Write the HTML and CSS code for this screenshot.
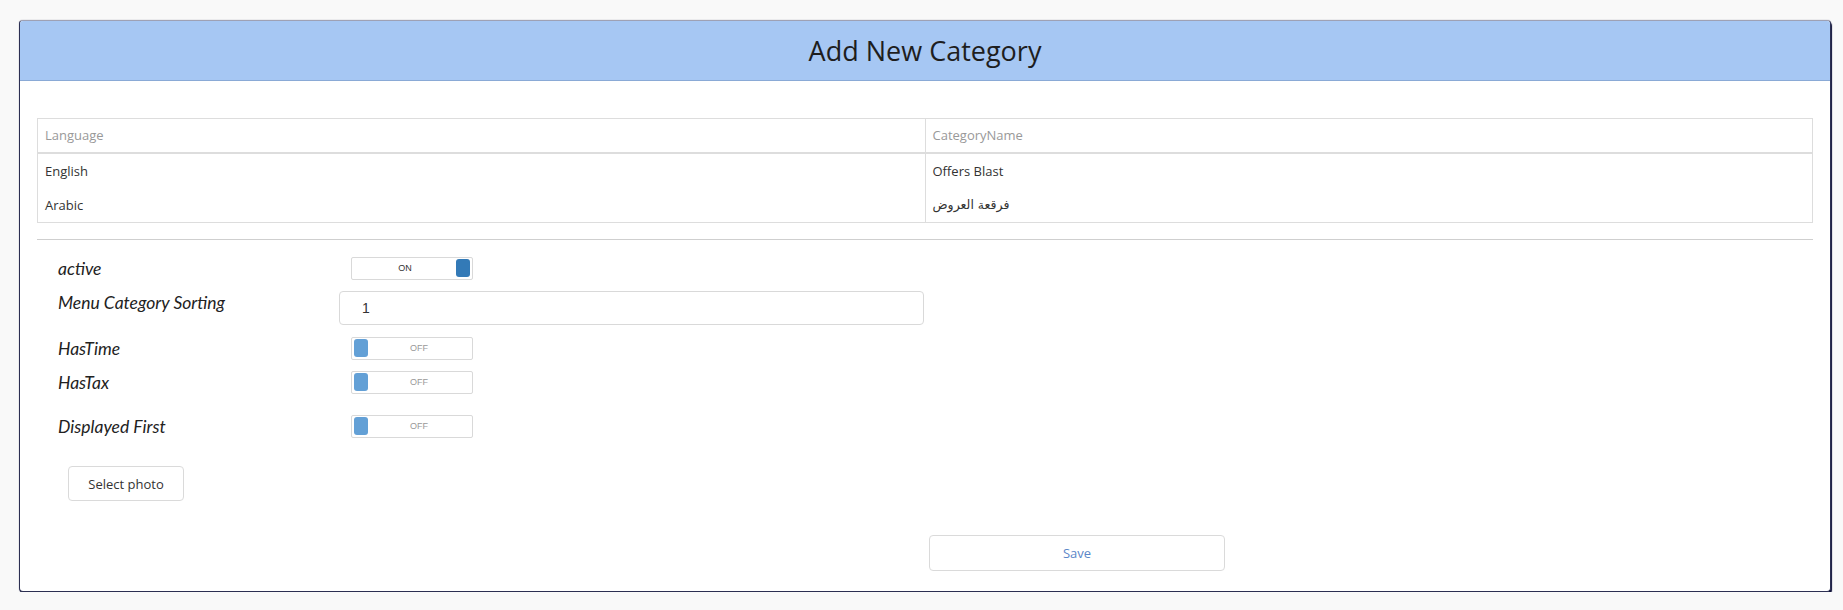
FILE: index.html
```html
<!DOCTYPE html>
<html>
<head>
<meta charset="utf-8">
<link rel="stylesheet" href="styles.css">
</head>
<body>
<div class="card">
  <div class="card-head"><h1 class="title">Add New Category</h1></div>
  <div class="card-body">
    <table class="lang-table">
      <thead>
        <tr><th>Language</th><th>CategoryName</th></tr>
      </thead>
      <tbody>
        <tr><td>English</td><td>Offers Blast</td></tr>
        <tr><td>Arabic</td><td><span class="ar" dir="rtl">فرقعة العروض</span></td></tr>
      </tbody>
    </table>
    <div class="divider"></div>
    <div class="form">
      <div class="row r-active">
        <label class="lbl">active</label>
        <div class="toggle on"><span class="tg-text">ON</span><span class="handle"></span></div>
      </div>
      <div class="row r-sort">
        <label class="lbl">Menu Category Sorting</label>
        <div class="input">1</div>
      </div>
      <div class="row r-time">
        <label class="lbl">HasTime</label>
        <div class="toggle off"><span class="handle"></span><span class="tg-text">OFF</span></div>
      </div>
      <div class="row r-tax">
        <label class="lbl">HasTax</label>
        <div class="toggle off"><span class="handle"></span><span class="tg-text">OFF</span></div>
      </div>
      <div class="row r-first">
        <label class="lbl">Displayed First</label>
        <div class="toggle off"><span class="handle"></span><span class="tg-text">OFF</span></div>
      </div>
      <div class="photo-row"><button class="btn">Select photo</button></div>
    </div>
    <div class="save-row"><button class="btn save">Save</button></div>
  </div>
</div>
</body>
</html>
```

FILE: styles.css
```css
html, body {
  margin: 0;
  padding: 0;
  background: #f9f9f9;
}
body {
  padding-top: 20px;
  font-family: "Open Sans", "Noto Sans", sans-serif;
}
.card {
  margin: 0 12px 0 19px;
  background: #fff;
  border: 1px solid #2c2f52;
  border-top-color: #9ea1b4;
  border-radius: 4px;
  box-shadow: 1px 2px 1px #0c0e36, 0 0 1px rgba(20, 22, 60, 0.6);
  overflow: hidden;
}
.card-head {
  height: 59px;
  background: #a6c7f3;
  border-bottom: 1px solid #8aaad6;
  display: flex;
  align-items: center;
  justify-content: center;
}
.title {
  margin: 0;
  font-weight: 400;
  font-size: 27px;
  color: #1e1e1e;
  font-family: "Open Sans", "Noto Sans", sans-serif;
  padding-bottom: 1px;
}
.card-body {
  padding: 37px 17px 20px;
}
.lang-table {
  width: 100%;
  border-collapse: collapse;
  border: 1px solid #ddd;
  table-layout: fixed;
  font-size: 13px;
}
.lang-table th, .lang-table td {
  padding: 8px 7px;
  text-align: left;
}
.lang-table th {
  color: #999;
  font-weight: 400;
  line-height: 17px;
  height: 17px;
  border-bottom: 2px solid #ddd;
  border-left: 1px solid #ddd;
}
.lang-table td {
  color: #333;
  line-height: 18px;
  height: 18px;
  border-left: 1px solid #ddd;
}
.ar {
  font-family: "DejaVu Sans", "Noto Sans", sans-serif;
  font-size: 12.5px;
  line-height: 18px;
  display: inline-block;
  vertical-align: top;
}
.divider {
  height: 1px;
  background: #cfcfcf;
  margin-top: 16px;
}
.form {
  padding-left: 21px;
}
.row {
  display: grid;
  grid-template-columns: 281px auto;
  align-items: start;
}
.lbl {
  font-family: "Lato", "Open Sans", sans-serif;
  font-style: italic;
  font-size: 17.5px;
  line-height: 23px;
  color: #222;
}
.r-active { margin-top: 17px; }
.r-sort { margin-top: 11px; }
.r-time { margin-top: 12px; }
.r-tax { margin-top: 11px; }
.r-first { margin-top: 21px; }
.toggle {
  margin-left: 12px;
  width: 122px;
  height: 23px;
  box-sizing: border-box;
  border: 1px solid #d9d9d9;
  border-radius: 2px;
  display: flex;
  align-items: center;
  padding: 0 2px 1px;
}
.handle {
  width: 14px;
  height: 18px;
  border-radius: 3px;
  flex: none;
}
.on .handle { background: #337ab7; }
.off .handle { background: #63a0d6; }
.tg-text {
  flex: 1;
  text-align: center;
  font-family: "Liberation Sans", Arial, sans-serif;
  font-size: 9px;
  line-height: 12px;
}
.on .tg-text { color: #333; }
.off .tg-text { color: #999; }
.input {
  width: 585px;
  height: 34px;
  box-sizing: border-box;
  border: 1px solid #d9d9d9;
  border-radius: 4px;
  padding-left: 22px;
  display: flex;
  align-items: center;
  font-family: "Liberation Sans", Arial, sans-serif;
  font-size: 14px;
  color: #333;
}
.photo-row {
  margin-top: 28px;
  padding-left: 10px;
  display: flex;
}
.btn {
  height: 35px;
  background: #fff;
  border: 1px solid #dadada;
  border-radius: 4px;
  font-family: "Open Sans", "Noto Sans", sans-serif;
  font-size: 13px;
  color: #333;
  padding: 0 14px;
}
.photo-row .btn {
  width: 116px;
}
.save-row {
  margin-top: 34px;
  display: flex;
  padding-left: calc(50% + 4px);
}
.btn.save {
  width: 296px;
  height: 36px;
  color: #5b86c8;
}
```
